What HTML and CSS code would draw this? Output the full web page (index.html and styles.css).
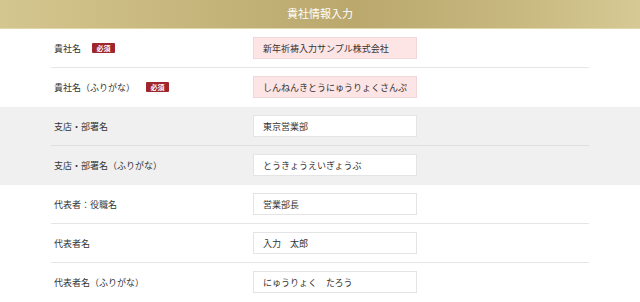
FILE: index.html
```html
<!DOCTYPE html>
<html lang="ja">
<head>
    <meta charset="UTF-8">
    <meta name="viewport" content="width=device-width, initial-scale=1.0">
    <title>貴社情報入力</title>
    <link rel="stylesheet" href="styles.css">
</head>
<body>
    <main class="company-form">
        <h2 class="form-title">貴社情報入力</h2>

        <section class="group">
            <div class="row">
                <label class="label">貴社名<span class="req">必須</span></label>
                <input class="field field-req" type="text" value="新年祈祷入力サンプル株式会社">
            </div>
            <div class="row">
                <label class="label">貴社名（ふりがな）<span class="req">必須</span></label>
                <input class="field field-req" type="text" value="しんねんきとうにゅうりょくさんぷるかぶしきがいしゃ">
            </div>
        </section>

        <section class="group group-grey">
            <div class="row">
                <label class="label">支店・部署名</label>
                <input class="field" type="text" value="東京営業部">
            </div>
            <div class="row">
                <label class="label">支店・部署名（ふりがな）</label>
                <input class="field" type="text" value="とうきょうえいぎょうぶ">
            </div>
        </section>

        <section class="group">
            <div class="row">
                <label class="label">代表者：役職名</label>
                <input class="field" type="text" value="営業部長">
            </div>
            <div class="row">
                <label class="label">代表者名</label>
                <input class="field" type="text" value="入力　太郎">
            </div>
            <div class="row">
                <label class="label">代表者名（ふりがな）</label>
                <input class="field" type="text" value="にゅうりょく　たろう">
            </div>
        </section>
    </main>
</body>
</html>
```

FILE: styles.css
```css
body {
    margin: 0;
    background: #fff;
    color: #333;
    font-family: "Noto Sans CJK JP", "Noto Sans", sans-serif;
    font-size: 9px;
}

.form-title {
    margin: 0;
    height: 28px;
    line-height: 27px;
    text-align: center;
    color: #fff;
    font-size: 11px;
    font-weight: normal;
    background: linear-gradient(90deg, #d4c68f 0%, #c6b67c 30%, #baa86d 55%, #c7b87f 80%, #d7c994 100%);
    border-bottom: 1px solid #e2d8ab;
}

.group-grey {
    background: #f0f0f0;
}

.row {
    width: 538px;
    margin: 0 auto;
    padding: 8px 0;
    display: flex;
    align-items: center;
    border-bottom: 1px solid #e6e6e6;
}

.group-grey .row {
    border-bottom-color: #dedede;
}

.row:last-child {
    border-bottom-color: transparent;
}

.label {
    width: 202px;
    padding-left: 3px;
    box-sizing: border-box;
    display: flex;
    align-items: center;
}

.req {
    display: inline-block;
    margin-left: 11px;
    width: 23px;
    height: 10px;
    line-height: 10px;
    text-align: center;
    background: #9f262c;
    color: #fff;
    font-size: 7px;
    font-weight: bold;
    border-radius: 1px;
}

.field {
    width: 164px;
    height: 22px;
    box-sizing: border-box;
    padding: 0 9px;
    border: 1px solid #e4e4e4;
    background: #fff;
    color: #333;
    font-family: inherit;
    font-size: 9px;
    outline: none;
}

.field-req {
    background: #fde4e5;
    border-color: #f2d7d8;
}
```
